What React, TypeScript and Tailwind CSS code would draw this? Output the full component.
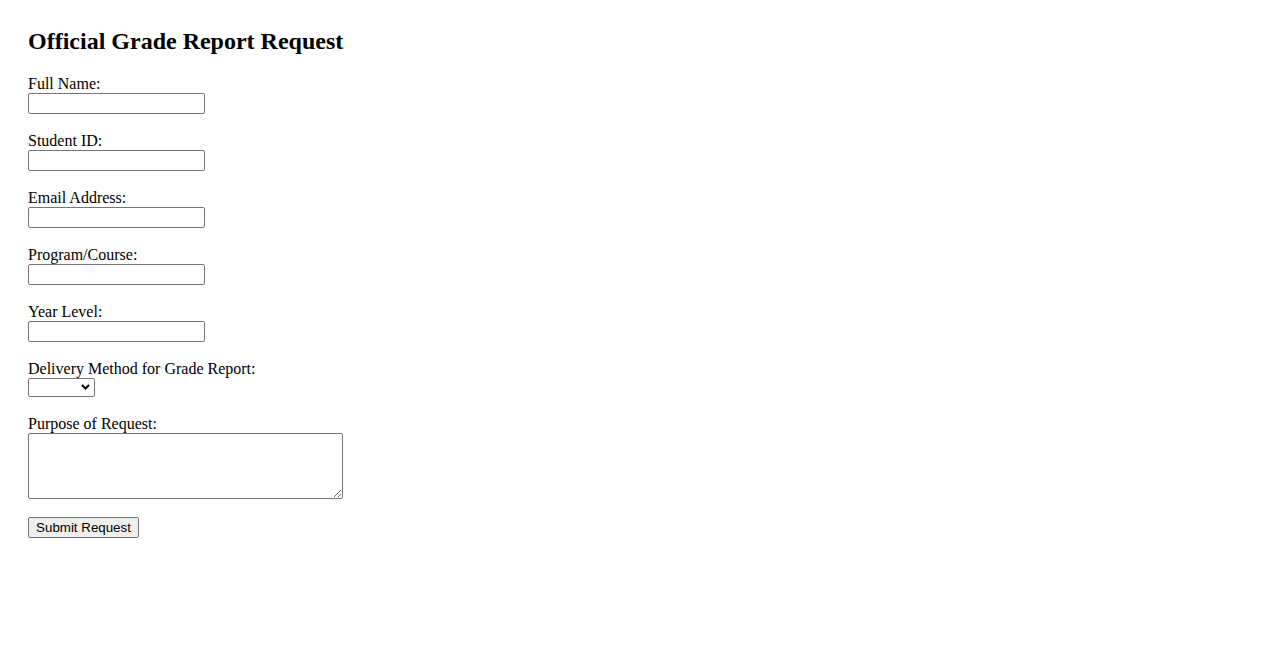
import React from 'react';

const fields = ['Full Name:', 'Student ID:', 'Email Address:', 'Program/Course:', 'Year Level:'];

const App: React.FC = () => {
    return (
        <div className="min-h-screen bg-white text-black px-[28px] pt-[28px] font-['Liberation_Serif',serif] text-[16px]">
            <h2 className="text-[24px] font-bold leading-[27px] mb-[20px]">Official Grade Report Request</h2>

            <form className="flex flex-col items-start">
                {fields.map(label => (
                    <div key={label} className="flex flex-col items-start mb-[18px]">
                        <label className="leading-[18px]">{label}</label>
                        <input
                            type="text"
                            className="w-[177px] h-[21px] border border-[#767676] rounded-[2px] px-[2px] text-[13.33px] font-['Liberation_Sans',sans-serif] bg-white"
                        />
                    </div>
                ))}

                <div className="flex flex-col items-start mb-[18px]">
                    <label className="leading-[18px]">Delivery Method for Grade Report:</label>
                    <div className="relative flex">
                        <select className="appearance-none block w-[67px] h-[19px] border border-[#767676] rounded-[2px] bg-white text-[13.33px] font-['Liberation_Sans',sans-serif]">
                            <option value=""></option>
                            <option value="pickup">Pick-up</option>
                            <option value="email">Email</option>
                        </select>
                        <svg className="absolute right-[5px] top-[6px] pointer-events-none" width="9" height="6" viewBox="0 0 9 6">
                            <path d="M1 1 L4.5 4.5 L8 1" fill="none" stroke="#000" strokeWidth="2" />
                        </svg>
                    </div>
                </div>

                <div className="flex flex-col items-start mb-[18px]">
                    <label className="leading-[18px]">Purpose of Request:</label>
                    <textarea className="block w-[315px] h-[66px] border border-[#767676] rounded-[2px] bg-white p-[2px] text-[13.33px] font-['Liberation_Mono',monospace]" />
                </div>

                <button
                    type="submit"
                    className="h-[21px] w-[111px] border border-[#767676] rounded-[2px] bg-[#efefef] text-[13.33px] leading-none font-['Liberation_Sans',sans-serif] text-black"
                >
                    Submit Request
                </button>
            </form>
        </div>
    );
};

export default App;
